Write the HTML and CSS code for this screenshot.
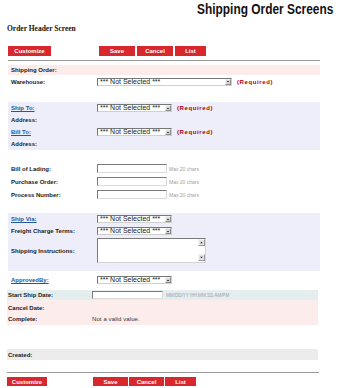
FILE: index.html
```html
<!DOCTYPE html>
<html>
<head>
<meta charset="utf-8">
<title>Shipping Order Screens</title>
<link rel="stylesheet" href="styles.css">
</head>
<body>
<div class="page">
  <div class="titlebar"><h1 class="title">Shipping Order Screens</h1></div>
  <div class="subtitle">Order Header Screen</div>

  <div class="toolbar">
    <span class="btn btn-cust">Customize</span>
    <div class="btn-group">
      <span class="btn w-save">Save</span>
      <span class="btn w-cancel">Cancel</span>
      <span class="btn w-list">List</span>
    </div>
  </div>
  <div class="rule"></div>

  <div class="form">
    <div class="row sec-pink h10"><span class="label">Shipping Order:</span></div>
    <div class="row h13">
      <span class="label">Warehouse:</span>
      <span class="value">
        <span class="select sel-wide"><span class="sel-text">*** Not Selected ***</span><span class="sel-arrow"><svg width="5" height="5" viewBox="0 0 5 5"><path d="M1 1.8h3L2.5 3.3z" fill="#111"/></svg></span></span>
        <span class="required">(Required)</span>
      </span>
    </div>

    <div class="sec-blue blue1">
      <div class="row h12">
        <a class="label link" href="#">Ship To:</a>
        <span class="value">
          <span class="select sel-std"><span class="sel-text">*** Not Selected ***</span><span class="sel-arrow"><svg width="5" height="5" viewBox="0 0 5 5"><path d="M1 1.8h3L2.5 3.3z" fill="#111"/></svg></span></span>
          <span class="required">(Required)</span>
        </span>
      </div>
      <div class="row h12"><span class="label">Address:</span></div>
      <div class="row h12">
        <a class="label link" href="#">Bill To:</a>
        <span class="value">
          <span class="select sel-std"><span class="sel-text">*** Not Selected ***</span><span class="sel-arrow"><svg width="5" height="5" viewBox="0 0 5 5"><path d="M1 1.8h3L2.5 3.3z" fill="#111"/></svg></span></span>
          <span class="required">(Required)</span>
        </span>
      </div>
      <div class="row h12"><span class="label">Address:</span></div>
    </div>

    <div class="plain">
      <div class="row h13">
        <span class="label">Bill of Lading:</span>
        <span class="value"><span class="input"></span><span class="hint">Max 20 chars</span></span>
      </div>
      <div class="row h13">
        <span class="label">Purchase Order:</span>
        <span class="value"><span class="input"></span><span class="hint">Max 20 chars</span></span>
      </div>
      <div class="row h13">
        <span class="label">Process Number:</span>
        <span class="value"><span class="input"></span><span class="hint">Max 20 chars</span></span>
      </div>
    </div>

    <div class="sec-blue blue2">
      <div class="row h12">
        <a class="label link" href="#">Ship Via:</a>
        <span class="value"><span class="select sel-std"><span class="sel-text">*** Not Selected ***</span><span class="sel-arrow"><svg width="5" height="5" viewBox="0 0 5 5"><path d="M1 1.8h3L2.5 3.3z" fill="#111"/></svg></span></span></span>
      </div>
      <div class="row h12">
        <span class="label">Freight Charge Terms:</span>
        <span class="value"><span class="select sel-std"><span class="sel-text">*** Not Selected ***</span><span class="sel-arrow"><svg width="5" height="5" viewBox="0 0 5 5"><path d="M1 1.8h3L2.5 3.3z" fill="#111"/></svg></span></span></span>
      </div>
      <div class="row h27">
        <span class="label">Shipping Instructions:</span>
        <span class="value">
          <span class="textarea">
            <span class="scroll">
              <span class="sbtn"><svg width="5" height="5" viewBox="0 0 5 5"><path d="M1 3.2h3L2.5 1.7z" fill="#333"/></svg></span>
              <span class="sbtn"><svg width="5" height="5" viewBox="0 0 5 5"><path d="M1 1.8h3L2.5 3.3z" fill="#333"/></svg></span>
            </span>
          </span>
        </span>
      </div>
    </div>

    <div class="row h12 approved">
      <a class="label link" href="#">ApprovedBy:</a>
      <span class="value"><span class="select sel-std"><span class="sel-text">*** Not Selected ***</span><span class="sel-arrow"><svg width="5" height="5" viewBox="0 0 5 5"><path d="M1 1.8h3L2.5 3.3z" fill="#111"/></svg></span></span></span>
    </div>
  </div>

  <div class="form2">
    <div class="row2 h10 sec-date">
      <span class="label2">Start Ship Date:</span>
      <span class="value"><span class="input input-date"></span><span class="hint hint-date">MM/DD/YY HH:MM:SS AM/PM</span></span>
    </div>
    <div class="sec-pink2">
      <div class="row2 h11"><span class="label2">Cancel Date:</span></div>
      <div class="row2 h12"><span class="label2">Complete:</span><span class="value note">Not a valid value.</span></div>
    </div>
    <div class="row2 h11 sec-grey"><span class="label2">Created:</span></div>
  </div>

  <div class="rule rule-bottom"></div>
  <div class="toolbar toolbar-bottom">
    <span class="btn btn-cust2">Customize</span>
    <div class="btn-group btn-group2">
      <span class="btn w-save2">Save</span>
      <span class="btn w-cancel2">Cancel</span>
      <span class="btn w-list2">List</span>
    </div>
  </div>
</div>
</body>
</html>
```
FILE: styles.css
```css
* { box-sizing: border-box; }

body {
  margin: 0;
  background: #fff;
  font-family: "Liberation Sans", Arial, sans-serif;
  color: #1a1a1a;
}

.page {
  width: 340px;
  height: 388px;
  overflow: hidden;
}

.titlebar {
  height: 18px;
  padding-right: 7px;
  text-align: right;
}

.title {
  display: inline-block;
  margin: 0;
  font-size: 14px;
  line-height: 18px;
  font-weight: bold;
  color: #111;
  transform: scaleX(0.85);
  transform-origin: right center;
}

.subtitle {
  margin: 6px 0 0 7px;
  height: 10px;
  font-family: "Liberation Serif", "Times New Roman", serif;
  font-weight: bold;
  font-size: 7.5px;
  line-height: 10px;
  color: #111;
}

/* toolbar */
.toolbar {
  display: flex;
  margin: 12px 0 0 8px;
  height: 10px;
}

.btn {
  display: flex;
  align-items: center;
  justify-content: center;
  height: 10px;
  background: #d9282d;
  color: #fff;
  font-weight: bold;
  font-size: 6px;
}

.btn-cust { width: 43px; }

.btn-group {
  display: flex;
  gap: 2px;
  margin-left: 48px;
}

.w-save { width: 36px; }
.w-cancel { width: 36px; }
.w-list { width: 31px; }

.rule {
  margin: 4px 0 0 8px;
  width: 312px;
  height: 1px;
  background: #9a9a9a;
}

/* main form */
.form {
  margin-left: 8px;
  width: 312px;
}

.row {
  display: grid;
  grid-template-columns: 89px 1fr;
  align-items: center;
}

.h10 { height: 10px; }
.h11 { height: 11px; }
.h12 { height: 12px; }
.h13 { height: 13px; }
.h27 { height: 27px; }

.label {
  padding-left: 3px;
  font-weight: bold;
  font-size: 6px;
  color: #1a1a1a;
  white-space: nowrap;
}

.link {
  color: #2a5698;
  text-decoration: underline;
}

.value {
  display: flex;
  align-items: center;
}

.sec-pink {
  margin-top: 4px;
  background: #fcecec;
}

.sec-blue {
  background: #eeeefa;
}

.blue1 { margin-top: 14px; }
.plain { margin-top: 12px; }
.blue2 { margin-top: 12px; padding-bottom: 7px; }
.approved { margin-top: 3px; }

/* fake select */
.select {
  display: flex;
  align-items: center;
  height: 8px;
  border: 1px solid;
  border-color: #777 #cfcfcf #cfcfcf #777;
  background: #fff;
  font-size: 7px;
  color: #222;
}

.sel-wide { width: 135px; }
.sel-std { width: 75px; }

.sel-text {
  flex: 1;
  padding-left: 2px;
  line-height: 6px;
  white-space: nowrap;
}

.sel-arrow {
  display: flex;
  align-items: center;
  justify-content: center;
  width: 6px;
  height: 6px;
  background: #d8d8d8;
  border: 1px solid;
  border-color: #f2f2f2 #8a8a8a #8a8a8a #f2f2f2;
}

.required {
  margin-left: 5px;
  color: #b00000;
  font-weight: bold;
  font-size: 6px;
  letter-spacing: 0.6px;
  white-space: nowrap;
}

/* text input */
.input {
  width: 70px;
  height: 9px;
  border: 1px solid;
  border-color: #7a7a7a #dadada #dadada #7a7a7a;
  background: #fff;
}

.hint {
  margin-left: 2px;
  color: #a0a0a0;
  font-size: 5px;
  white-space: nowrap;
}

/* fake textarea */
.textarea {
  display: flex;
  justify-content: flex-end;
  width: 109px;
  height: 25px;
  border: 1px solid;
  border-color: #7a7a7a #d6d6d6 #d6d6d6 #7a7a7a;
  background: #fff;
}

.scroll {
  display: flex;
  flex-direction: column;
  justify-content: space-between;
  width: 7px;
  padding: 0 0 1px;
}

.sbtn {
  display: flex;
  width: 7px;
  height: 7px;
  align-items: center;
  justify-content: center;
  background: #e4e4e4;
  border: 1px solid;
  border-color: #f4f4f4 #9a9a9a #9a9a9a #f4f4f4;
}

/* lower form */
.form2 {
  margin: 4px 0 0 7px;
  width: 311px;
}

.row2 {
  display: grid;
  grid-template-columns: 85px 1fr;
  align-items: center;
}

.label2 {
  padding-left: 1px;
  font-weight: bold;
  font-size: 6px;
  color: #1a1a1a;
  white-space: nowrap;
}

.sec-date { background: #e4eeee; }

.input-date {
  width: 71px;
  height: 8px;
}

.hint-date {
  margin-left: 3px;
  font-size: 4.6px;
  color: #9aa0b0;
}

.sec-pink2 {
  padding-top: 2px;
  background: #fcecec;
}

.note {
  font-size: 6px;
  letter-spacing: 0.1px;
  color: #333;
}

.sec-grey {
  margin-top: 24px;
  background: #ececec;
}

/* bottom */
.rule-bottom {
  margin: 12px 0 0 7px;
  width: 312px;
}

.toolbar-bottom {
  margin: 4px 0 0 7px;
  height: 9px;
}

.toolbar-bottom .btn { height: 9px; }

.btn-cust2 { width: 40px; }

.btn-group2 {
  gap: 1px;
  margin-left: 46px;
}

.w-save2 { width: 35px; }
.w-cancel2 { width: 35px; }
.w-list2 { width: 31px; }
```
